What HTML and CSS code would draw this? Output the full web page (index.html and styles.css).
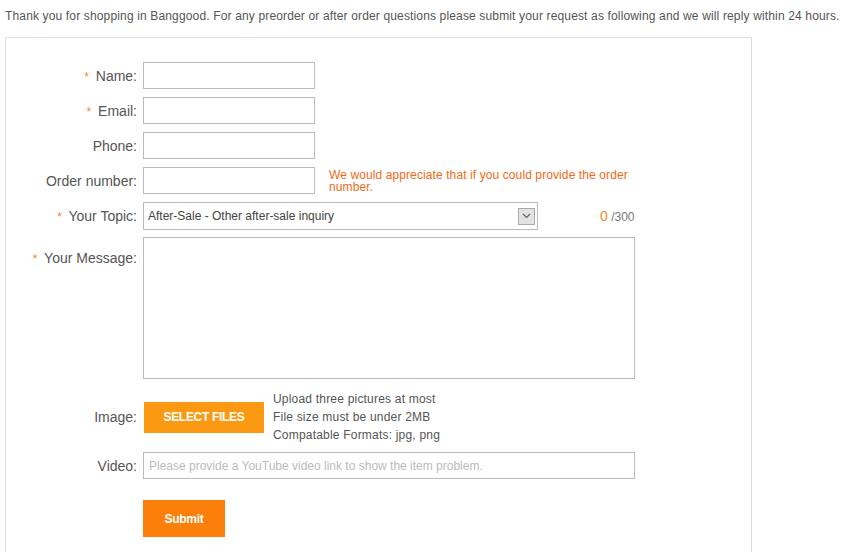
FILE: index.html
```html
<!DOCTYPE html>
<html>
<head>
<meta charset="utf-8">
<link rel="stylesheet" href="styles.css">
</head>
<body>
<p class="intro">Thank you for shopping in Banggood. For any preorder or after order questions please submit your request as following and we will reply within 24 hours.</p>
<div class="panel">
  <div class="row">
    <label class="lbl"><span class="req">*</span> Name:</label>
    <input class="inp" type="text">
  </div>
  <div class="row">
    <label class="lbl"><span class="req">*</span> Email:</label>
    <input class="inp" type="text">
  </div>
  <div class="row">
    <label class="lbl">Phone:</label>
    <input class="inp" type="text">
  </div>
  <div class="row">
    <label class="lbl">Order number:</label>
    <input class="inp" type="text">
    <span class="hint">We would appreciate that if you could provide the order number.</span>
  </div>
  <div class="row topic">
    <label class="lbl"><span class="req">*</span> Your Topic:</label>
    <div class="select">
      <span>After-Sale - Other after-sale inquiry</span>
      <span class="arrow"><svg width="9" height="6" viewBox="0 0 9 6"><path d="M1 1l3.5 3.5L8 1" fill="none" stroke="#666" stroke-width="1.2"/></svg></span>
    </div>
    <span class="count"><b>0</b> /300</span>
  </div>
  <div class="row top">
    <label class="lbl"><span class="req">*</span> Your Message:</label>
    <textarea class="area"></textarea>
  </div>
  <div class="row image">
    <label class="lbl">Image:</label>
    <button class="files">SELECT FILES</button>
    <div class="notes">
      <div>Upload three pictures at most</div>
      <div>File size must be under 2MB</div>
      <div>Compatable Formats: jpg, png</div>
    </div>
  </div>
  <div class="row">
    <label class="lbl">Video:</label>
    <input class="wide" type="text" placeholder="Please provide a YouTube video link to show the item problem.">
  </div>
  <div class="row submitrow">
    <span class="lbl"></span>
    <button class="submit">Submit</button>
  </div>
</div>
</body>
</html>
```
FILE: styles.css
```css
* { box-sizing: border-box; }
body {
  margin: 0;
  padding: 0 5px;
  font-family: "Liberation Sans", Arial, sans-serif;
  color: #555;
  background: #fff;
}
.intro {
  margin: 9px 0 0;
  font-size: 12px;
  line-height: 15px;
  color: #555;
  white-space: nowrap;
  letter-spacing: 0.15px;
}
.panel {
  margin-top: 13px;
  width: 747px;
  height: 520px;
  border: 1px solid #ddd;
  border-bottom: none;
  padding-top: 24px;
}
.row {
  display: flex;
  align-items: center;
  margin-bottom: 8px;
}
.row.topic { margin-bottom: 7px; }
.row.top { align-items: flex-start; }
.lbl {
  width: 131px;
  text-align: right;
  font-size: 14px;
  color: #555;
  margin-right: 6px;
  flex: none;
}
.row.top .lbl { padding-top: 13px; }
.req {
  color: #f08a3c;
  font-size: 12px;
  margin-right: 3px;
}
.inp {
  width: 172px;
  height: 27px;
  border: 1px solid #bbb;
  margin: 0;
  padding: 0 4px;
  font: 12px "Liberation Sans", Arial, sans-serif;
}
.hint {
  width: 310px;
  margin-left: 14px;
  font-size: 12px;
  line-height: 12px;
  letter-spacing: 0.1px;
  color: #f06a14;
}
.select {
  width: 395px;
  height: 28px;
  border: 1px solid #bbb;
  display: flex;
  align-items: center;
  justify-content: space-between;
  padding: 0 2px 0 4px;
  font-size: 12px;
  color: #444;
}
.arrow {
  width: 17px;
  height: 17px;
  background: #e2e2e2;
  border: 1px solid #aaa;
  display: flex;
  align-items: center;
  justify-content: center;
}
.count {
  margin-left: 62px;
  font-size: 12px;
  color: #777;
}
.count b {
  font-weight: normal;
  font-size: 14px;
  color: #f08a20;
}
.area {
  width: 492px;
  height: 142px;
  border: 1px solid #bbb;
  margin: 0;
  resize: none;
}
.row.image { margin-top: 11px; margin-bottom: 8px; }
.files {
  margin-left: 1px;
  width: 120px;
  height: 31px;
  border: none;
  background: #fb9a12;
  color: #fff;
  font: bold 12px "Liberation Sans", Arial, sans-serif;
  letter-spacing: -0.3px;
  cursor: pointer;
}
.notes {
  margin-left: 9px;
  font-size: 12px;
  line-height: 18px;
  letter-spacing: 0.2px;
  color: #555;
}
.wide {
  width: 492px;
  height: 27px;
  border: 1px solid #bbb;
  margin: 0;
  padding: 0 5px;
  font: 12px "Liberation Sans", Arial, sans-serif;
}
.wide::placeholder { color: #bbb; }
.submitrow { margin-top: 21px; }
.submit {
  width: 82px;
  height: 37px;
  border: none;
  background: #fb7f0a;
  color: #fff;
  font: bold 12px "Liberation Sans", Arial, sans-serif;
  letter-spacing: -0.3px;
  cursor: pointer;
}
```
